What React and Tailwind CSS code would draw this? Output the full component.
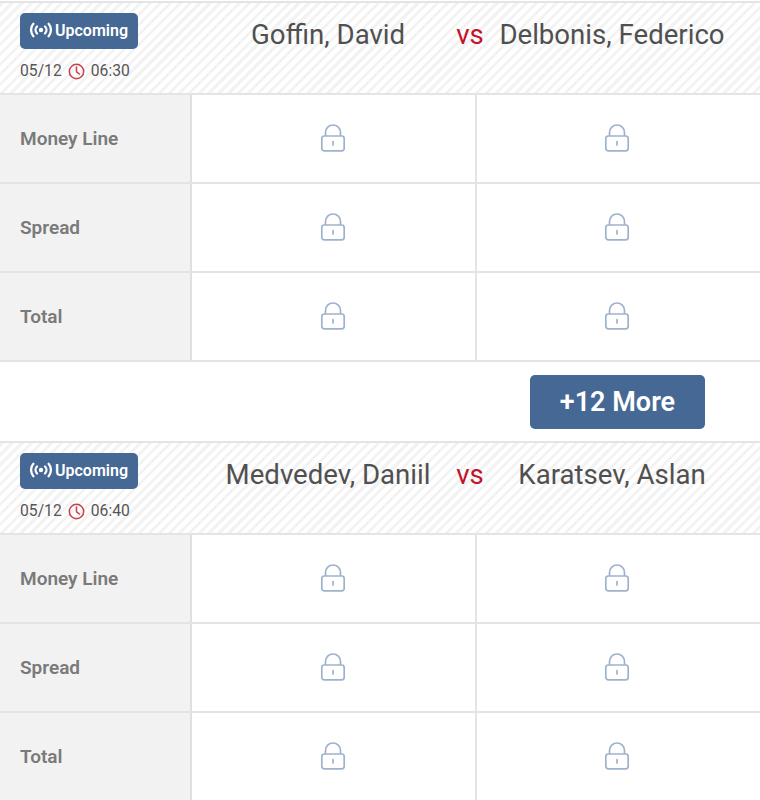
import React from 'react';

const games = [
  { home: 'Goffin, David', away: 'Delbonis, Federico', date: '05/12', time: '06:30', more: true },
  { home: 'Medvedev, Daniil', away: 'Karatsev, Aslan', date: '05/12', time: '06:40', more: false },
];

function LiveIcon() {
  return (
    <svg width="22" height="16" viewBox="0 0 22 16" fill="none" stroke="currentColor" strokeWidth="2.3" strokeLinecap="round">
      <circle cx="11" cy="8" r="2.2" fill="currentColor" stroke="none" />
      <path d="M7 4.5a5 5 0 0 0 0 7" />
      <path d="M15 4.5a5 5 0 0 1 0 7" />
      <path d="M3.4 1.8a9.5 9.5 0 0 0 0 12.4" />
      <path d="M18.6 1.8a9.5 9.5 0 0 1 0 12.4" />
    </svg>
  );
}

function ClockIcon() {
  return (
    <svg width="17" height="17" viewBox="0 0 17 17" fill="none" stroke="#c8404c" strokeWidth="1.5" strokeLinecap="round" strokeLinejoin="round">
      <circle cx="8.5" cy="8.5" r="7.2" />
      <path d="M8.5 4v4.8l3 2.2" />
    </svg>
  );
}

function LockIcon() {
  return (
    <svg width="26" height="28" viewBox="0 0 26 28" fill="none" stroke="#9fb2cc" strokeWidth="1.7" strokeLinejoin="round">
      <rect x="1.8" y="12" width="22.4" height="14.8" rx="2.5" />
      <path d="M5.5 12V8.5a7.5 7.5 0 0 1 15 0V12" />
      <path d="M13 17.5v3.4" strokeLinecap="round" />
    </svg>
  );
}

function OddsRow({ label }) {
  return (
    <div className="flex h-[89px] border-b-2 border-[#e4e4e4]">
      <div className="w-[192px] shrink-0 flex items-center pl-5 pt-[2px] bg-[#f2f2f2] border-r-2 border-[#e0e0e0] text-[19px] font-semibold text-[#7a7a7a]">
        {label}
      </div>
      <div className="w-[285px] shrink-0 flex items-center justify-center border-r-2 border-[#e4e4e4] pr-[2px] pb-[2px]">
        <LockIcon />
      </div>
      <div className="flex-1 flex items-center justify-center pr-[3px] pb-[2px]">
        <LockIcon />
      </div>
    </div>
  );
}

function Game({ game }) {
  return (
    <div>
      <div className="flex h-[94px] border-y-2 border-[#e4e4e4] bg-[repeating-linear-gradient(135deg,#f3f3f3_0,#f3f3f3_3px,#ffffff_3px,#ffffff_7px)]">
        <div className="w-[192px] shrink-0 pl-5 pt-[10px]">
          <div className="w-[118px] h-[36px] flex items-center justify-center gap-[3px] rounded-[5px] bg-[#466894] text-white text-[16px] font-semibold">
            <span className="mb-[3px]"><LiveIcon /></span>
            Upcoming
          </div>
          <div className="flex items-center gap-[6px] mt-[12px] text-[15.7px] text-[#555555] leading-[20px]">
            {game.date} <ClockIcon /> {game.time}
          </div>
        </div>
        <div className="flex-1 flex items-start pl-2 pt-[14px] text-[27.6px] leading-[36px] text-[#505050]">
          <div className="w-[256px] shrink-0 text-center">{game.home}</div>
          <div className="w-[28px] shrink-0 text-center text-[#c2142d]">vs</div>
          <div className="w-[256px] shrink-0 text-center">{game.away}</div>
        </div>
      </div>
      <OddsRow label="Money Line" />
      <OddsRow label="Spread" />
      <OddsRow label="Total" />
      {game.more && (
        <div className="flex h-[79px] justify-end items-start pt-[13px] pr-[55px]">
          <button className="w-[175px] h-[54px] rounded-[5px] bg-[#466894] text-white text-[27px] font-semibold">
            +12 More
          </button>
        </div>
      )}
    </div>
  );
}

export default function App() {
  return (
    <div className="w-[760px] h-[800px] overflow-hidden bg-white pt-px font-['Roboto',sans-serif]">
      {games.map((game) => (
        <Game key={game.home} game={game} />
      ))}
    </div>
  );
}
